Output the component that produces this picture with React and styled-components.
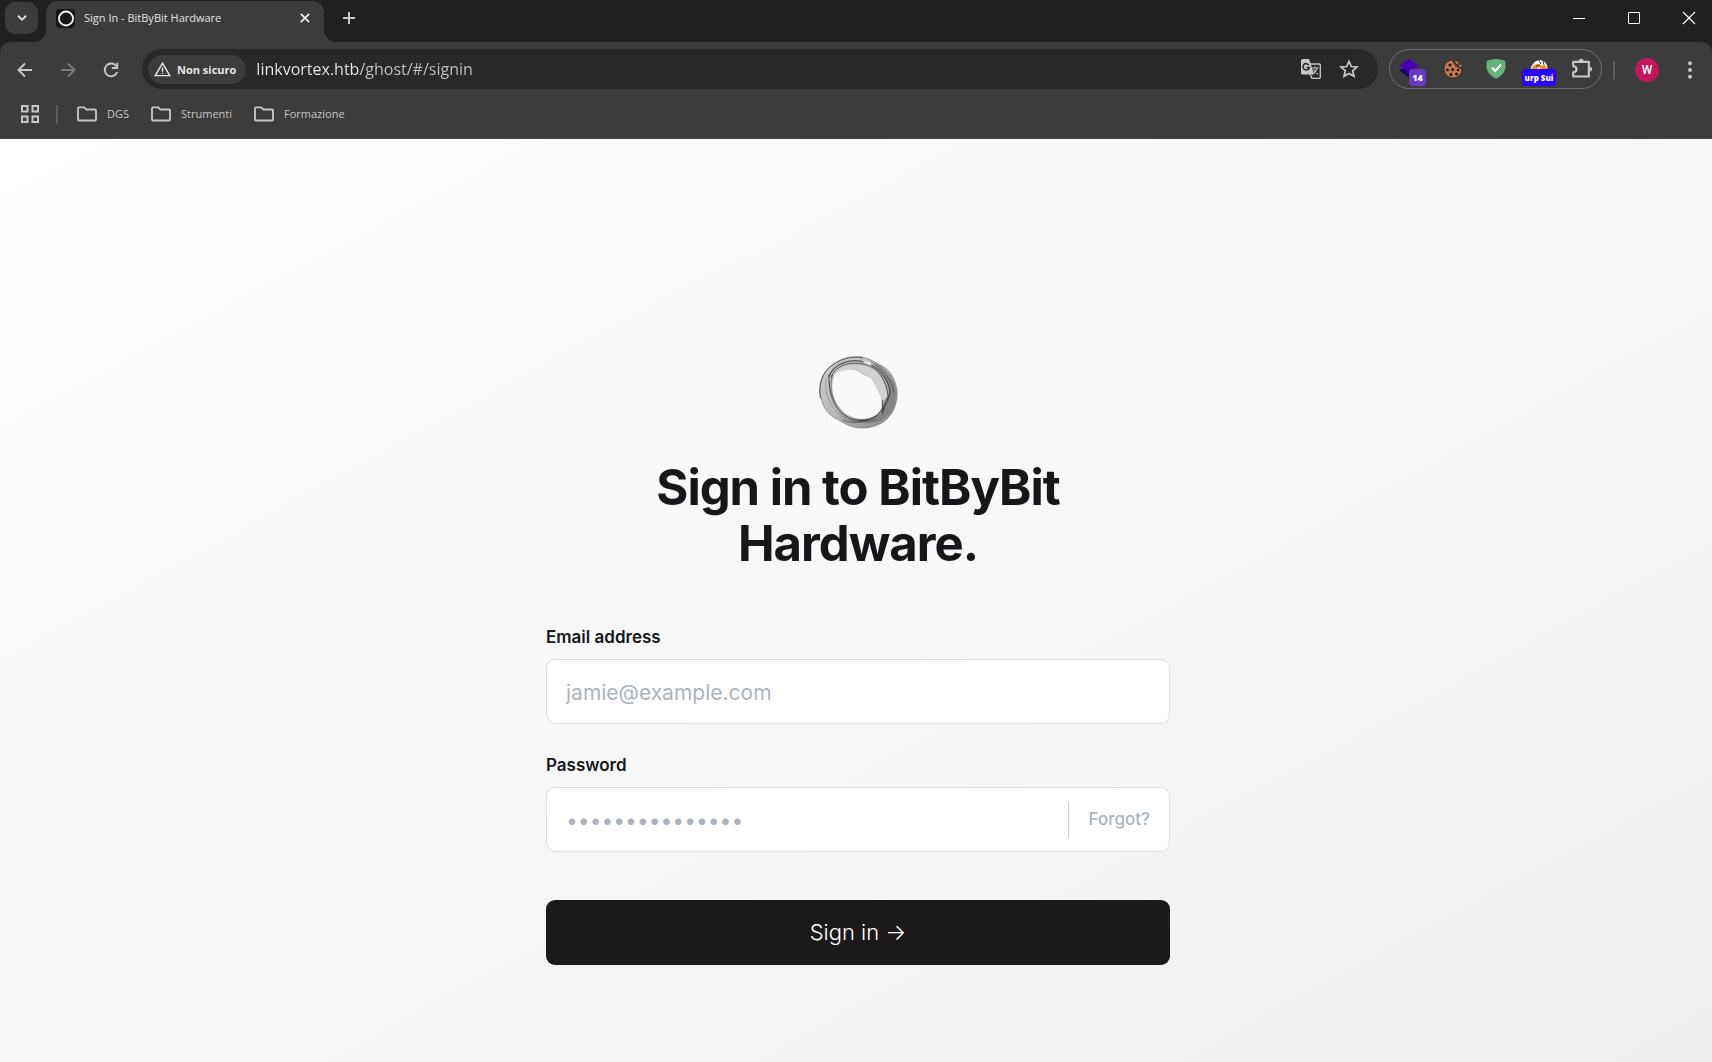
import React from 'react';
import styled, { createGlobalStyle } from 'styled-components';

const palette = {
    frame: '#1f2120',
    bar: '#3c3c3c',
    field: '#282828',
    icon: '#c7c7c7',
    line: '#5e5e5e',
    ink: '#15171a',
    muted: '#abb4be',
    border: '#dddedf',
};

const GlobalStyle = createGlobalStyle`
    * {
        box-sizing: border-box;
    }
    body {
        margin: 0;
        font-family: Inter, "Liberation Sans", sans-serif;
    }
    button, input {
        font-family: inherit;
        margin: 0;
    }
    button {
        border: none;
        padding: 0;
        background: none;
        color: inherit;
        cursor: pointer;
    }
`;

const Window = styled.div`
    display: flex;
    flex-direction: column;
    min-height: 100vh;
`;

const Chrome = styled.header`
    background: ${palette.frame};
    color: ${palette.icon};
    font-family: "Open Sans", "Noto Sans", sans-serif;
    font-size: 11px;
`;

const TabStrip = styled.div`
    display: flex;
    align-items: flex-start;
    height: 42px;
    padding-left: 5px;
`;

const TabSearch = styled.button`
    display: flex;
    align-items: center;
    justify-content: center;
    width: 33px;
    height: 32px;
    margin: 2px 8px 0 0;
    border-radius: 10px;
    background: ${palette.bar};
    color: #e6e6e6;
`;

const Tab = styled.div`
    position: relative;
    display: flex;
    align-items: center;
    width: 278px;
    height: 41px;
    margin-top: 1px;
    padding: 0 12px 7px 10px;
    border-radius: 12px 12px 0 0;
    background: ${palette.bar};
    color: #e3e3e3;

    &:before,
    &:after {
        content: '';
        position: absolute;
        bottom: 0;
        width: 12px;
        height: 12px;
    }
    &:before {
        left: -12px;
        background: radial-gradient(circle at 0 0, transparent 12px, ${palette.bar} 12px);
    }
    &:after {
        right: -12px;
        background: radial-gradient(circle at 100% 0, transparent 12px, ${palette.bar} 12px);
    }
`;

const TabTitle = styled.span`
    flex: 1;
    margin-left: 9px;
    line-height: 16px;
    white-space: nowrap;
`;

const IconButton = styled.button`
    display: flex;
    align-items: center;
    justify-content: center;
    flex: none;
    width: ${props => props.$width || 32}px;
    height: 32px;
    color: ${props => props.$color || palette.icon};
`;

const NewTab = styled(IconButton)`
    margin: 2px 0 0 9px;
`;

const WindowButtons = styled.div`
    display: flex;
    gap: 9px;
    margin: 2px 0 0 auto;
`;

const Toolbar = styled.div`
    display: flex;
    align-items: center;
    gap: 11px;
    height: 54px;
    padding: 2px 11px 0 9px;
    border-radius: 10px 10px 0 0;
    background: ${palette.bar};
`;

const AddressBar = styled.div`
    display: flex;
    align-items: center;
    flex: 1;
    gap: 6px;
    height: 40px;
    margin: 0 0 2px 4px;
    padding: 0 13px 0 6px;
    border-radius: 20px;
    background: ${palette.field};
`;

const SecurityChip = styled.button`
    display: flex;
    align-items: center;
    flex: none;
    gap: 6px;
    height: 29px;
    padding: 0 10px 0 6px;
    border-radius: 15px;
    background: ${palette.bar};
    color: #e6e6e6;
    font-size: 11px;
    font-weight: 700;
`;

// the host part of the address is brighter than the path
const Address = styled.input`
    flex: 1;
    min-width: 0;
    height: 32px;
    padding: 0 0 0 4px;
    border: none;
    outline: none;
    font-size: 16px;
    color: transparent;
    background: linear-gradient(90deg, #ececec 107px, #c4c4c4 107px);
    background-clip: text;
    -webkit-background-clip: text;
`;

const Extensions = styled.div`
    display: flex;
    align-items: center;
    gap: 11px;
    height: 40px;
    margin-bottom: 2px;
    padding: 0 3px 0 4px;
    border: 1px solid #707070;
    border-radius: 20px;
`;

const ExtensionButton = styled(IconButton)`
    position: relative;
`;

const Badge = styled.span`
    position: absolute;
    top: 16px;
    left: ${props => props.$left}px;
    width: ${props => props.$width}px;
    height: 17px;
    border-radius: 4px;
    background: ${props => props.$color};
    color: #fff;
    font-size: ${props => props.$size}px;
    font-weight: 800;
    line-height: 17px;
    text-align: center;
    white-space: nowrap;
`;

const Divider = styled.span`
    flex: none;
    width: 2px;
    height: 19px;
    border-radius: 1px;
    background: ${palette.line};
`;

const Avatar = styled.span`
    width: 24px;
    height: 24px;
    border-radius: 50%;
    background: #c2185b;
    color: #fff;
    font-family: Roboto, sans-serif;
    font-size: 12px;
    font-weight: 500;
    line-height: 24px;
    text-align: center;
`;

const BookmarksBar = styled.nav`
    display: flex;
    align-items: center;
    height: 43px;
    padding: 0 20px 6px;
    border-bottom: 1px solid #444;
    background: ${palette.bar};
`;

const AppsButton = styled(IconButton)`
    width: 20px;
    margin-right: 16px;
`;

const Bookmark = styled.a`
    display: flex;
    align-items: center;
    gap: 10px;
    margin: 0 3px 0 19px;
    color: ${palette.icon};
    line-height: 16px;
    text-decoration: none;
`;

const Page = styled.main`
    flex: 1;
    display: flex;
    flex-direction: column;
    align-items: center;
    padding: 216px 40px 40px 44px;
    background: linear-gradient(to bottom right, #fff, #efefef);
    color: ${palette.ink};
`;

const LoginForm = styled.form`
    display: flex;
    flex-direction: column;
    width: 100%;
    max-width: 624px;
`;

const SiteLogo = styled.svg`
    display: block;
    width: 80px;
    height: 74px;
    margin: 0 auto 31px;
`;

const Title = styled.h1`
    max-width: 480px;
    margin: 0 auto 55px;
    font-size: 49px;
    font-weight: 700;
    line-height: 56px;
    letter-spacing: -1px;
    text-align: center;
`;

const Label = styled.label`
    margin-bottom: 12px;
    font-size: 17px;
    font-weight: 600;
    line-height: 20px;
`;

const Field = styled.div`
    display: flex;
    align-items: center;
    height: 65px;
    margin-bottom: ${props => props.$gap}px;
    border: 1px solid ${palette.border};
    border-radius: 9px;
    background: #fff;
`;

const TextInput = styled.input`
    flex: 1;
    min-width: 0;
    height: 100%;
    padding: 2px 19px 0;
    border: none;
    outline: none;
    background: none;
    color: ${palette.ink};
    font-size: 21px;

    &::placeholder {
        color: ${palette.muted};
        opacity: 1;
    }
`;

const Forgot = styled.button`
    height: 36px;
    padding: 0 19px 2px 20px;
    border-left: 1px solid #c5c9cd;
    color: ${palette.muted};
    font-size: 17px;
    font-weight: 500;
`;

const SignIn = styled.button`
    height: 65px;
    padding-bottom: 2px;
    border-radius: 9px;
    background: #1c191a;
    color: #fff;
    font-size: 22px;
    font-weight: 300;
`;

const Icon = ({ size = 20, stroke = 2, children, ...rest }) => (
    <svg
        width={size}
        height={size}
        viewBox="0 0 20 20"
        fill="none"
        stroke="currentColor"
        strokeWidth={stroke}
        aria-hidden="true"
        {...rest}
    >
        {children}
    </svg>
);

const Folder = () => (
    <Icon stroke={1.8}>
        <path d="M1 15.5V4.2Q1 3.3 2 3.3H7.2L9.4 5.5H18Q19 5.5 19 6.5V15.5Q19 16.5 18 16.5H2Q1 16.5 1 15.5Z" />
    </Icon>
);

const Logo = () => (
    <SiteLogo viewBox="55 45 240 222" role="img" aria-label="BitByBit Hardware">
        <defs>
            <linearGradient id="ring" x1="0" y1="0" x2="1" y2="1">
                <stop offset="0" stopColor="#cfcfcf" />
                <stop offset="0.5" stopColor="#b8b8b8" />
                <stop offset="1" stopColor="#868686" />
            </linearGradient>
        </defs>
        <path
            fill="url(#ring)"
            fillRule="evenodd"
            d="M165 50C200 48 222 65 244 76C274 91 287 119 292 150C296 184 282 222 256 242C238 257 207 266 179 264C151 263 128 246 105 234C78 219 65 190 61 159C58 126 69 98 91 80C112 62 135 52 165 50Z
            M115 94C134 86 162 84 178 94C190 105 203 106 214 114C229 128 232 144 244 163C256 183 250 208 229 225C202 242 162 242 137 224C112 206 98 178 98 146C98 126 101 106 115 94Z"
        />
        <path fill="#d2d2d2" d="M112 92C138 70 194 71 226 91C252 109 262 139 264 168L249 187C244 161 230 138 216 115C202 105 192 107 182 94C164 84 136 85 112 92Z" />
        <path fill="#777" opacity="0.6" d="M205 61C242 70 281 102 288 145C293 184 277 221 251 237C225 252 191 247 173 239C207 242 239 233 250 209C258 194 277 173 266 137C256 105 235 78 205 61Z" />
        <g fill="none" stroke="#333">
            <path strokeWidth="2" opacity="0.5" d="M165 50C200 48 222 65 244 76C274 91 287 119 292 150C296 184 282 222 256 242C238 257 207 266 179 264C151 263 128 246 105 234C78 219 65 190 61 159C58 126 69 98 91 80C112 62 135 52 165 50Z" />
            <path strokeWidth="3" opacity="0.7" d="M63 176C54 140 67 94 99 75C128 53 165 47 190 54" />
            <path strokeWidth="4" opacity="0.75" d="M87 110C105 68 155 54 198 67C235 79 262 115 270 146C276 173 250 198 248 222" />
            <path strokeWidth="3" opacity="0.75" d="M88 104C85 144 99 187 122 213C150 243 199 253 232 226C248 213 253 195 265 171C262 126 234 77 190 72C148 63 105 77 93 114" />
            <path strokeWidth="2" opacity="0.65" d="M99 103C88 138 98 179 121 206C149 239 197 250 234 225" />
            <path strokeWidth="2" opacity="0.65" d="M91 118C84 160 103 207 139 232C168 249 206 248 232 236" />
            <path strokeWidth="1.5" opacity="0.5" d="M80 115C72 155 88 199 126 228C154 247 206 258 247 238" />
            <path strokeWidth="3" opacity="0.6" d="M225 73C255 94 280 129 283 158" />
            <path strokeWidth="1.5" opacity="0.35" d="M112 97C134 88 169 85 180 94C190 106 207 106 216 117C228 136 242 158 249 187" />
            <path strokeWidth="4" opacity="0.7" d="M249 180C247 190 248 202 250 214" />
            <path strokeWidth="4" opacity="0.5" d="M130 240C155 253 181 248 207 239" />
        </g>
        <path fill="#eee" d="M188 62L212 67L216 77L196 70Z" />
    </SiteLogo>
);

const BrowserTabs = () => (
    <TabStrip>
        <TabSearch aria-label="Search tabs">
            <Icon size={18}>
                <path d="M5.5 7.5L10 12L14.5 7.5" />
            </Icon>
        </TabSearch>
        <Tab>
            <svg width="19" height="19" viewBox="0 0 19 19" aria-hidden="true">
                <rect width="19" height="19" rx="4" fill="#14161a" />
                <circle cx="10" cy="9.5" r="7" fill="none" stroke="#f2f2f2" strokeWidth="1.8" />
            </svg>
            <TabTitle>Sign In - BitByBit Hardware</TabTitle>
            <IconButton $width={14} $color="#ececec" aria-label="Close tab">
                <Icon size={14} stroke={2.5}>
                    <path d="M4 4L16 16M16 4L4 16" />
                </Icon>
            </IconButton>
        </Tab>
        <NewTab aria-label="New tab">
            <Icon>
                <path d="M10 4V16M4 10H16" />
            </Icon>
        </NewTab>
        <WindowButtons>
            <IconButton $width={46} $color="#fff" aria-label="Minimize">
                <Icon stroke={1}><path d="M4 10.5H16" /></Icon>
            </IconButton>
            <IconButton $width={46} $color="#fff" aria-label="Maximize">
                <Icon stroke={1}><rect x="4.5" y="4.5" width="11" height="11" rx="0.5" /></Icon>
            </IconButton>
            <IconButton $width={46} $color="#fff" aria-label="Close">
                <Icon stroke={1.2}><path d="M4 4L16 16M16 4L4 16" /></Icon>
            </IconButton>
        </WindowButtons>
    </TabStrip>
);

const ExtensionList = () => (
    <Extensions>
        <ExtensionButton aria-label="Layers">
            <svg width="24" height="24" viewBox="0 0 24 24" aria-hidden="true">
                <path d="M1 13L11 9L20 16L11 21Z" fill="#23006f" />
                <path d="M1 8.5L11 2L21 8.5L11 15Z" fill="#4a00b4" />
            </svg>
            <Badge $left={15} $width={17} $size={9} $color="#6b38c2">14</Badge>
        </ExtensionButton>
        <ExtensionButton aria-label="Cookies">
            <Icon stroke={1}>
                <path
                    d="M10 1Q9 4 12 5Q12 8 15 8Q17 10 19 9.5C19 15 15 19 10 19S1 15 1 10S5 1 10 1Z"
                    fill="#c67c50"
                    stroke="#47291c"
                />
                <path d="M12.5 2L15.5 3L15 5.5L13 4.5ZM16 5.5L18.5 6L18 8L16 7.5Z" fill="#c67c50" stroke="none" />
                <g fill="#201713" stroke="none">
                    <circle cx="7" cy="6" r="1.5" />
                    <circle cx="4.5" cy="11" r="1.4" />
                    <circle cx="9.7" cy="10.5" r="1.6" />
                    <circle cx="8" cy="15.5" r="1.5" />
                    <circle cx="13.5" cy="15" r="1.5" />
                    <circle cx="15" cy="11" r="1.3" />
                </g>
            </Icon>
        </ExtensionButton>
        <ExtensionButton aria-label="Ad blocker">
            <Icon>
                <path
                    d="M10 0C13 0.3 17 0.8 19.5 2V8C19.5 13 15 17 10 19.8C5 17 0.5 13 0.5 8V2C3 0.8 7 0.3 10 0Z"
                    fill="#67b279"
                    stroke="none"
                />
                <path d="M6 8.5L9.3 12L15 5.5" stroke="#fff" />
            </Icon>
        </ExtensionButton>
        <ExtensionButton aria-label="Burp Suite">
            <Icon>
                <g stroke="none">
                    <path d="M1.5 10C3 4.5 6 1.5 11 1.2C15.5 1 18.5 5 18.5 10Z" fill="#fff" />
                    <path d="M4 7L9 4.5L12 6L8 10H2Z" fill="#f58a1f" />
                    <path d="M11 7L16 6L18.5 10H11Z" fill="#f58a1f" />
                    <path d="M10 1.5L12 5M14 2L15 6M7 7L11 6.5" stroke="#3a2b22" strokeWidth="1" />
                </g>
            </Icon>
            <Badge $left={-1} $width={34} $size={8} $color="#2a00ff">urp Sui</Badge>
        </ExtensionButton>
        <ExtensionButton aria-label="Extensions">
            <Icon size={22}>
                <path d="M2 3.5H16.2V16.8H2V13C6 12.7 6 7.6 2 7.3Z" strokeLinejoin="round" />
                <path d="M7 3C7 0 11.5 0 11.5 3ZM17 8C20 8 20 12.3 17 12.3Z" fill="currentColor" stroke="none" />
            </Icon>
        </ExtensionButton>
    </Extensions>
);

const BrowserToolbar = () => (
    <Toolbar>
        <IconButton aria-label="Back">
            <Icon stroke={1.9}><path d="M17 10H4M10 3.5L3.5 10L10 16.5" /></Icon>
        </IconButton>
        <IconButton $color="#7b7b7b" aria-label="Forward">
            <Icon stroke={1.9}><path d="M3 10H16M10 3.5L16.5 10L10 16.5" /></Icon>
        </IconButton>
        <IconButton aria-label="Reload">
            <Icon stroke={1.9}>
                <path d="M15.6 6.5A6.4 6.4 0 1 0 16.2 12" />
                <path d="M16.3 2.8V8H11" />
            </Icon>
        </IconButton>
        <AddressBar>
            <SecurityChip>
                <Icon size={17} stroke={1.7}>
                    <path d="M10 2.6L18.5 17.2H1.5Z" />
                    <path d="M10 7.5V12.5M10 13.8V15.4" />
                </Icon>
                Non sicuro
            </SecurityChip>
            <Address aria-label="Address" defaultValue="linkvortex.htb/ghost/#/signin" spellCheck="false" />
            <IconButton aria-label="Translate">
                <Icon stroke={1.3}>
                    <path d="M9 5H18.2Q19.3 5 19.3 6V18.3Q19.3 19.3 18.3 19.3H11L9 15" />
                    <path d="M1.5 0H8L9.5 4L13 15.5H1.5Q0 15.5 0 14V1.5Q0 0 1.5 0Z" fill="currentColor" stroke="none" />
                    <path d="M7.8 6A3.2 3.2 0 1 0 8.3 8.5H5.5" stroke={palette.field} strokeWidth="1.5" />
                    <path d="M11 9H17.5M14 7.5V9M16 9Q15 13 12.5 14.5M12.5 10.5Q14 13.5 17 15" strokeWidth="1.1" />
                </Icon>
            </IconButton>
            <IconButton aria-label="Bookmark this page">
                <Icon stroke={1.7}>
                    <path d="M10 2.3L12.3 7.5L18 8L13.7 11.8L15 17.3L10 14.4L5 17.3L6.3 11.8L2 8L7.7 7.5Z" />
                </Icon>
            </IconButton>
        </AddressBar>
        <ExtensionList />
        <Divider />
        <IconButton $width={42} aria-label="Profile">
            <Avatar>W</Avatar>
        </IconButton>
        <IconButton $width={22} aria-label="Menu">
            <Icon>
                <g fill="currentColor" stroke="none">
                    <circle cx="10" cy="3.2" r="2" />
                    <circle cx="10" cy="10" r="2" />
                    <circle cx="10" cy="16.8" r="2" />
                </g>
            </Icon>
        </IconButton>
    </Toolbar>
);

const Bookmarks = () => (
    <BookmarksBar>
        <AppsButton aria-label="Apps">
            <Icon>
                <path d="M2 2H7.5V7.5H2ZM12.5 2H18V7.5H12.5ZM2 12.5H7.5V18H2ZM12.5 12.5H18V18H12.5Z" />
            </Icon>
        </AppsButton>
        <Divider />
        {['DGS', 'Strumenti', 'Formazione'].map(name => (
            <Bookmark key={name} href="#">
                <Folder />
                {name}
            </Bookmark>
        ))}
    </BookmarksBar>
);

const App = () => {
    return (
        <Window>
            <GlobalStyle />
            <Chrome>
                <BrowserTabs />
                <BrowserToolbar />
                <Bookmarks />
            </Chrome>
            <Page>
                <LoginForm onSubmit={e => e.preventDefault()}>
                    <Logo />
                    <Title>Sign in to BitByBit Hardware.</Title>
                    <Label htmlFor="email">Email address</Label>
                    <Field $gap={31}>
                        <TextInput id="email" type="email" placeholder="jamie@example.com" />
                    </Field>
                    <Label htmlFor="password">Password</Label>
                    <Field $gap={48}>
                        <TextInput id="password" type="password" placeholder="•••••••••••••••" />
                        <Forgot type="button">Forgot?</Forgot>
                    </Field>
                    <SignIn type="submit">Sign in →</SignIn>
                </LoginForm>
            </Page>
        </Window>
    );
};

export default App;
